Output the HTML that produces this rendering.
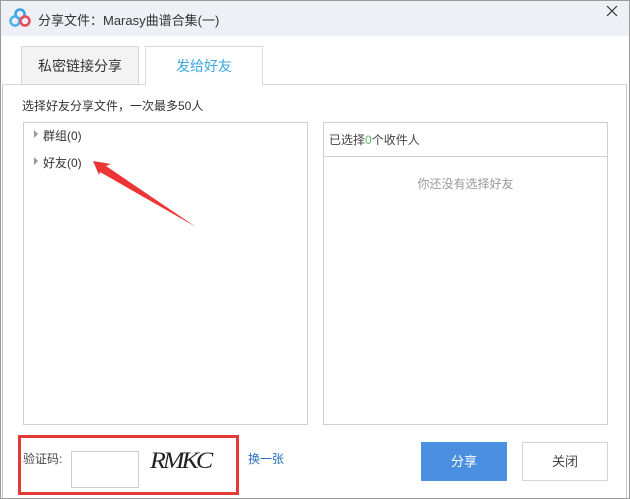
<!DOCTYPE html>
<html><head><meta charset="utf-8"><style>
*{margin:0;padding:0;box-sizing:border-box}
body{width:630px;height:499px;background:#fff;font-family:"Liberation Sans","Noto Sans CJK SC",sans-serif;font-size:12px;color:#333;position:relative;overflow:hidden}
.a{position:absolute}
</style></head><body>
<div class="a" style="left:0;top:0;width:630px;height:499px;border:1px solid #9a9a9a"></div>
<div class="a" style="left:1px;top:1px;width:628px;height:35px;background:#eef0f5"></div>
<svg class="a" style="left:9px;top:8px" width="22" height="20" viewBox="0 0 22 20">
<circle cx="11" cy="6" r="4.5" fill="none" stroke="#3aa0e6" stroke-width="2.5"/>
<circle cx="6" cy="13" r="4.5" fill="none" stroke="#4fb0ee" stroke-width="2.5"/>
<circle cx="16" cy="13" r="4.5" fill="none" stroke="#e84c5c" stroke-width="2.5"/>
</svg>
<div class="a" style="left:38px;top:10px;font-size:13px;color:#333">分享文件：Marasy曲谱合集(一)</div>
<svg class="a" style="left:606px;top:5px" width="12" height="12"><path d="M1 1L11 11M11 1L1 11" stroke="#333" stroke-width="1.2"/></svg>
<div class="a" style="left:21px;top:46px;width:118px;height:39px;background:#f3f3f3;border:1px solid #d8d8d8;border-bottom:none;text-align:center;line-height:38px;font-size:14px;color:#333">私密链接分享</div>
<div class="a" style="left:145px;top:46px;width:118px;height:39px;background:#fff;border:1px solid #d8d8d8;border-bottom:none;text-align:center;line-height:38px;font-size:14px;color:#3ba7e3">发给好友</div>
<div class="a" style="left:2px;top:84px;width:143px;border-top:1px solid #d8d8d8"></div>
<div class="a" style="left:263px;top:84px;width:364px;border-top:1px solid #d8d8d8"></div>
<div class="a" style="left:2px;top:84px;height:414px;border-left:1px solid #c8c8c8"></div>
<div class="a" style="left:626px;top:84px;height:414px;border-left:1px solid #c8c8c8"></div>
<div class="a" style="left:22px;top:97px;font-size:12px;color:#333">选择好友分享文件，一次最多50人</div>
<div class="a" style="left:23px;top:122px;width:285px;height:303px;border:1px solid #cfcfcf"></div>
<div class="a" style="left:34px;top:130px;width:0;height:0;border-left:4px solid #999;border-top:4px solid transparent;border-bottom:4px solid transparent"></div>
<div class="a" style="left:43px;top:127px">群组(0)</div>
<div class="a" style="left:34px;top:157px;width:0;height:0;border-left:4px solid #999;border-top:4px solid transparent;border-bottom:4px solid transparent"></div>
<div class="a" style="left:43px;top:154px">好友(0)</div>
<div class="a" style="left:323px;top:122px;width:285px;height:303px;border:1px solid #cfcfcf"></div>
<div class="a" style="left:323px;top:156px;width:285px;border-top:1px solid #cfcfcf"></div>
<div class="a" style="left:329px;top:131px;color:#444">已选择<span style="color:#5cb85c">0</span>个收件人</div>
<div class="a" style="left:323px;top:175px;width:285px;text-align:center;color:#999">你还没有选择好友</div>
<svg class="a" style="left:0;top:0" width="630" height="499">
<polygon points="93,161 111,164 106,166 196,227 100,172 99,175" fill="#ee3535"/>
</svg>
<div class="a" style="left:18px;top:435px;width:221px;height:60px;border:3px solid #e53935"></div>
<div class="a" style="left:23px;top:450px;color:#444">验证码:</div>
<div class="a" style="left:71px;top:451px;width:68px;height:37px;border:1px solid #ccc"></div>
<div class="a" style="left:150px;top:446px;font-family:'Liberation Serif',serif;font-size:26px;font-style:italic;letter-spacing:-3px;color:#222;transform:scaleY(0.9)">RMKC</div>
<div class="a" style="left:248px;top:450px;color:#2a6fc0">换一张</div>
<div class="a" style="left:421px;top:442px;width:86px;height:39px;background:#4a8fe0;color:#fff;text-align:center;line-height:39px;font-size:13px">分享</div>
<div class="a" style="left:522px;top:442px;width:86px;height:39px;border:1px solid #d4d4d4;background:#fff;color:#444;text-align:center;line-height:37px;font-size:13px">关闭</div>
</body></html>
